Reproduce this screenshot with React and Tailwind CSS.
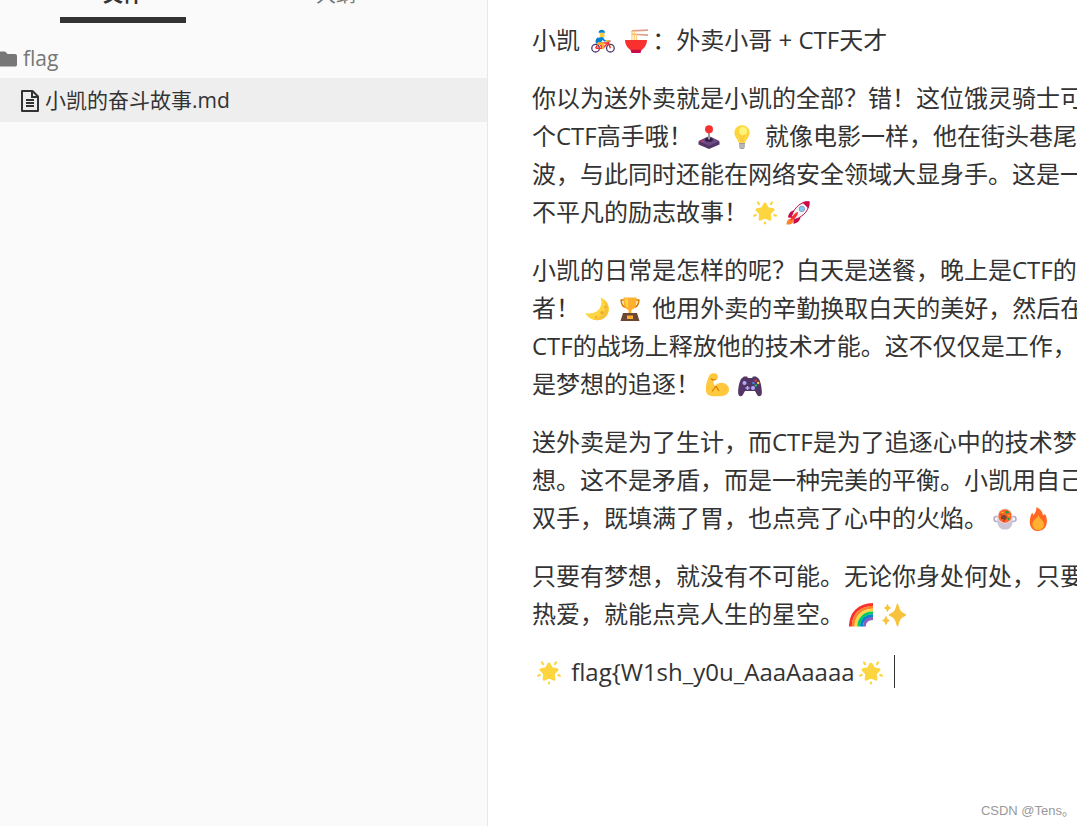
import React from 'react';
import { FaFolder } from 'react-icons/fa';

const emojis = {
  cyclist: (
    <>
      <g fill="none" strokeWidth="1.3">
        <circle cx="4.6" cy="19.2" r="3.8" stroke="#4a3768" />
        <circle cx="19.4" cy="19.2" r="3.8" stroke="#4a3768" />
        <path d="M4.6 19.2 8 14h9l-5.200 5.200H4.6M8 14l3.800 5.200M19.400 19.200 17 12h2.500" stroke="#f8312f" strokeWidth="1.5" />
      </g>
      <path d="M8.500 4h5v3.500L12 9 9 8z" fill="#ffc83d" />
      <path d="M7.500 3.800C7.500.200 13.500-.500 14.200 3.800z" fill="#0084ce" />
      <path d="M8 8.500 11.500 8l2.500 3h4v1.600h-4.600L11 11l-1.500 3-3.500-.5z" fill="#0084ce" />
      <path d="M6.500 8.500C4.500 10 4 12.500 5 14.500l4.500.5 2-5z" fill="#0084ce" />
      <path d="m14.500 11 4 .2v1.400h-4z" fill="#ffc83d" />
      <path d="m7 13 6 .8.500 1.700-1 4.500h-1.600l.3-3.700L6 15.500z" fill="#ffb02e" />
    </>
  ),
  noodles: (
    <>
      <path d="M8.500 1 24 .2v1.700L6.500 2.800zM8 4.500l16 .8V7L7 5.800z" fill="#e39d89" />
      <path d="M8 2v10M10.300 2v10M12.500 5v7" stroke="#ffce7c" strokeWidth="1.300" fill="none" />
      <path d="M1 11h22c0 4.700-2.800 8.500-6 10.300H7C3.800 19.500 1 15.700 1 11z" fill="#f8312f" />
      <path d="M6.500 20.800h11L16.500 24h-9z" fill="#ca0b4a" />
    </>
  ),
  joystick: (
    <>
      <path d="m1.500 16.500 10.500-5 10.500 5v3L12 24 1.500 19.500z" fill="#533566" />
      <path d="m1.500 16 10.500-5 10.500 5L12 20.800z" fill="#6d4a86" />
      <ellipse cx="12" cy="14.800" rx="4" ry="2" fill="#321b41" />
      <path d="M12 7v7.500" stroke="#9b9b9b" strokeWidth="2" />
      <circle cx="12" cy="4.200" r="4" fill="#f8312f" />
      <path d="m5 15.800 2 1" stroke="#f8312f" strokeWidth="1.200" />
    </>
  ),
  bulb: (
    <>
      <path d="M12 .2C7.600.2 4.400 3.500 4.400 7.600c0 4.800 3.500 6.200 4.200 10.200h6.800c.7-4 4.200-5.400 4.200-10.200C19.600 3.500 16.400.2 12 .2z" fill="#fcd53f" />
      <circle cx="13" cy="6" r="4" fill="#fff478" />
      <path d="m9.500 10 1.500 3v5M14.500 10 13 13v5" fill="none" stroke="#f9c23c" strokeWidth=".8" />
      <path d="M9 18h6v4l-1.500 2h-3L9 22z" fill="#9b9b9b" />
      <path d="M9 20h6M9 22h6" stroke="#d3d3d3" />
    </>
  ),
  star: (
    <>
      <path
        d="m12 3 2.600 4.800 5.400 1-3.800 4 .7 5.400-4.900-2.300-4.900 2.300.7-5.400L4 8.800l5.400-1z"
        fill="#fcd53f"
        stroke="#fcd53f"
        strokeWidth="3"
        strokeLinejoin="round"
      />
      <path
        d="m5 1.500 1 1.500M19 1.500 18 3M1.200 14.700l1.500-.7M22.800 14.700l-1.500-.7M12 21.500v1"
        stroke="#fcd53f"
        strokeWidth="2.200"
        strokeLinecap="round"
      />
    </>
  ),
  rocket: (
    <>
      <path d="M5 17.500c-3 0-4.500 3-4.500 6 3 .5 6.500-.5 7-3.500z" fill="#ff822d" />
      <path d="M8 9.500c-4 .5-5.500 3.500-6 7l5 .5zM14.500 16c-.5 4-3.500 6-7 7v-5z" fill="#ca0b4a" />
      <path d="M22.800.8C15.500.8 9 5 5.500 15L9 18.500C18.500 15 23.500 8.500 22.800.8z" fill="#f4f4f4" stroke="#ca0b4a" />
      <path d="M23.500.3c-2.500-.3-5 .1-7.300 1l6.200 6.200c1-2.300 1.400-4.700 1.100-7.200z" fill="#ca0b4a" />
      <circle cx="15.800" cy="7.900" r="2.700" fill="#83cbff" stroke="#7d8fa5" strokeWidth=".8" />
      <path d="M12 11c-3 .5-7 5-7.500 8.500C8 19 12 15 12 11z" fill="#f8312f" />
    </>
  ),
  moon: (
    <>
      <path d="M15.500.5C26 4.500 26.500 17 18.500 21.500 11.500 25.500 3 22 .5 16c8 2 19-3 15-15.500z" fill="#fcd53f" />
      <path d="M18.500 2c6.500 5.500 6.500 15.500 0 19.500-3.500 2-7.500 2.200-11 .5C18.500 21 23 11 18.500 2z" fill="#f9c23c" />
      <g fill="#e8a92e">
        <circle cx="20.500" cy="10" r="1.200" />
        <circle cx="17" cy="15.500" r="1.600" />
        <circle cx="11" cy="20" r="1.100" />
      </g>
    </>
  ),
  trophy: (
    <>
      <path d="M6.500 3H3.200c0 5 1.500 7 5.300 7.500M17.500 3h3.300c0 5-1.500 7-5.300 7.500" fill="none" stroke="#d67d00" strokeWidth="1.600" />
      <path d="M5.500.5h13c.5 6-.5 11-5 12.500v4h-3v-4C6 11.500 5 6.500 5.500.5z" fill="#ffb02e" />
      <path d="M7 1.500h3V11C7.500 9 6.800 5 7 1.500z" fill="#fcd53f" />
      <path d="M5 16h14l2.500 8h-19z" fill="#6d4534" />
      <path d="M9 18.500h6V22H9z" fill="#ffb02e" />
    </>
  ),
  biceps: (
    <>
      <path
        d="M5 1.500C7-.5 11.500-.3 12.500 2c1 2.500 0 5-2.500 5l-1.500.2c-.5 2 0 4.300 1.500 5.800 3.500-4.500 10.500-4.500 13.300.5 2 4.500-.8 9-6.300 9.500-5.500.7-12 .5-14.500-1.500C-1 17.500 1.500 7 5 1.500z"
        fill="#ffc83d"
      />
      <path d="M6 5.500 8 7l3-.5M11 13l-4 5.500M11 13l3 5" fill="none" stroke="#d67d00" strokeWidth="1.200" />
    </>
  ),
  gamepad: (
    <>
      <path
        d="M3.500 5.500 6 3.500h3L10 5h4l1-1.500h3l2.500 2c2.500 3 3.800 12 3.200 15.500-.6 2.500-3 3-4.500 1L17 18H7l-2.200 4c-1.500 2-3.900 1.500-4.500-1C-.3 17.500 1 8.500 3.500 5.500z"
        fill="#533566"
      />
      <circle cx="6.500" cy="10" r="2" fill="#b4acff" />
      <circle cx="15" cy="15" r="2" fill="#b4acff" />
      <path d="M7.500 15h4M9.500 13v4" stroke="#b4acff" strokeWidth="1.400" />
      <circle cx="17.800" cy="7.600" r="1.200" fill="#f8312f" />
      <circle cx="15.400" cy="10" r="1.200" fill="#3f8ef0" />
      <circle cx="20.200" cy="10" r="1.200" fill="#fcd53f" />
      <circle cx="17.800" cy="12.400" r="1.200" fill="#00d26a" />
    </>
  ),
  pot: (
    <>
      <rect x="1" y="9.500" width="22" height="5" rx="2.500" fill="none" stroke="#bea9c6" strokeWidth="1.600" />
      <path d="M4.500 9h15v6c0 4-2.500 6.500-5 7.500h-5c-2.500-1-5-3.500-5-7.500z" fill="#cdc4d6" />
      <circle cx="12" cy="9" r="7.500" fill="#e6e0eb" />
      <circle cx="12" cy="9" r="6.700" fill="#ff6723" />
      <path d="m8 9 3.500-1.500L14 10l-1.500 3L8 12z" fill="#7d4533" />
      <path d="m12 4.500 3-.5 1 2-3 .5zM14 11h3l-1.500 2.500z" fill="#00a651" />
      <path d="m8 5.500 2-1 .5 1.500zM15 8l2 .5-1 1.500z" fill="#fcd53f" />
      <path d="M7 7.500 8.500 7v1.500zM10 13.500h2v1h-2z" fill="#ca0b4a" />
    </>
  ),
  fire: (
    <>
      <path
        d="M10.500 0c4 2 6 5 6.500 8.500L19 7c2.500 4 2.500 10 0 13.500-2 2.800-4.500 3.500-7 3.500-5 0-8.500-4-8.200-9.500.2-4.500 1.200-7 2.700-9l.7 3C9 6 10.500 4 10.500 0z"
        fill="#ff6723"
      />
      <path d="M12.500 8c-1 3-6 5-6 9.500 0 3.500 2.500 5.500 5.700 5.500s5.800-2 5.800-5.500c0-4.500-4.500-5-5.500-9.500z" fill="#ffb02e" />
    </>
  ),
  rainbow: (
    <g fill="none" strokeWidth="2.900">
      <path d="M1.400 23.500C1.500 10 10 1.600 24 1.500" stroke="#f8312f" />
      <path d="M4.200 23.500C4.300 11.500 12 4.400 24 4.300" stroke="#ff822d" />
      <path d="M7 23.500C7 13.500 14 7.100 24 7.100" stroke="#fcd53f" />
      <path d="M9.800 23.500c0-8 5.700-13.600 14.200-13.600" stroke="#00c95f" />
      <path d="M12.600 23.500c0-6.500 4.400-10.800 11.400-10.800" stroke="#0084ce" />
      <path d="M15.400 23.500c0-5 3.100-8 8.600-8" stroke="#8b5fbf" />
    </g>
  ),
  sparkles: (
    <g fill="#f9c23c" stroke="#f9c23c" strokeLinejoin="round">
      <path d="M15.500 1.500c1.800 7 2.800 8.300 8 10.500-5.200 2.200-6.200 3.500-8 10.500-1.800-7-2.800-8.300-8-10.500 5.200-2.200 6.200-3.500 8-10.500z" strokeWidth="1.500" />
      <path d="M5.500 1.500c.8 2.200 1 2.500 3 3.500-2 1-2.200 1.300-3 3.500-.8-2.200-1-2.500-3-3.500 2-1 2.200-1.300 3-3.500zM4 13.500c.9 2.700 1.200 3 3.500 4-2.300 1-2.600 1.300-3.500 4-.9-2.700-1.200-3-3.500-4 2.300-1 2.600-1.300 3.500-4z" />
    </g>
  )
};

function Emoji({ name }) {
  return (
    <span className="inline-flex w-[33px] h-6 justify-center align-[-4px]">
      <svg viewBox="0 0 24 24" className="w-6 h-6" role="img" aria-label={name}>
        {emojis[name]}
      </svg>
    </span>
  );
}

const paragraphs = [
  [
    <>小凯 <Emoji name="cyclist" /><Emoji name="noodles" />：外卖小哥 + CTF天才</>
  ],
  [
    <>你以为送外卖就是小凯的全部？错！这位饿灵骑士可</>,
    <>个CTF高手哦！<Emoji name="joystick" /><Emoji name="bulb" /> 就像电影一样，他在街头巷尾</>,
    <>波，与此同时还能在网络安全领域大显身手。这是一</>,
    <>不平凡的励志故事！<Emoji name="star" /><Emoji name="rocket" /></>
  ],
  [
    <>小凯的日常是怎样的呢？白天是送餐，晚上是CTF的</>,
    <>者！<Emoji name="moon" /><Emoji name="trophy" /> 他用外卖的辛勤换取白天的美好，然后在</>,
    <>CTF的战场上释放他的技术才能。这不仅仅是工作，</>,
    <>是梦想的追逐！<Emoji name="biceps" /><Emoji name="gamepad" /></>
  ],
  [
    <>送外卖是为了生计，而CTF是为了追逐心中的技术梦</>,
    <>想。这不是矛盾，而是一种完美的平衡。小凯用自己</>,
    <>双手，既填满了胃，也点亮了心中的火焰。<Emoji name="pot" /><Emoji name="fire" /></>
  ],
  [
    <>只要有梦想，就没有不可能。无论你身处何处，只要</>,
    <>热爱，就能点亮人生的星空。<Emoji name="rainbow" /><Emoji name="sparkles" /></>
  ],
  [
    <>
      <Emoji name="star" /> flag&#123;W1sh_y0u_AaaAaaaa<Emoji name="star" />{' '}
      <span className="inline-block w-px h-[33px] bg-[#333333] align-[-7px]" />
    </>
  ]
];

function FileIcon() {
  return (
    <svg viewBox="0 0 18 22" className="w-[18px] h-[22px] shrink-0" fill="none" stroke="#333333" strokeWidth="2">
      <path d="M1 1h10.500L17 6.500V21H1z" strokeLinejoin="round" />
      <path d="M11 1v6h6" />
      <path d="M5 10h8M5 13h8M5 16h8" />
    </svg>
  );
}

function Sidebar() {
  return (
    <aside className="w-[488px] shrink-0 bg-[#fafafa] border-r border-[#e7e7e7]">
      <div className="flex items-end h-[23px] pl-[60px] gap-[87px] overflow-hidden text-[20px] leading-[30px]">
        <button type="button" className="w-[126px] pb-[7px] border-b-6 border-[#333333] font-bold text-[#333333]">
          文件
        </button>
        <button type="button" className="w-[126px] pb-[7px] border-b-6 border-transparent text-[#777777]">
          大纲
        </button>
      </div>
      <ul className="pt-[17px] text-[21px]">
        <li className="flex items-center h-[38px] gap-[6px] text-[#777777] overflow-hidden">
          <FaFolder className="w-5 h-5 -ml-[3px] shrink-0" />
          <span>flag</span>
        </li>
        <li className="flex items-center h-11 pt-[2px] pl-[21px] gap-[6px] bg-[#eeeeee] text-[#333333]">
          <FileIcon />
          <span>小凯的奋斗故事.md</span>
        </li>
      </ul>
    </aside>
  );
}

function App() {
  return (
    <div className="relative flex min-h-screen overflow-hidden bg-white font-['Open_Sans','Noto_Sans_CJK_SC',sans-serif]">
      <Sidebar />
      <main className="flex-1 min-w-0 overflow-hidden pt-[21px] pl-11 text-2xl leading-[38px] text-[#333333]">
        <div className="flex flex-col gap-5">
          {paragraphs.map((lines, i) => (
            <p key={i} className="whitespace-nowrap">
              {lines.map((line, j) => (
                <span key={j} className="block h-[38px]">{line}</span>
              ))}
            </p>
          ))}
        </div>
      </main>
      <div className="absolute right-[2px] bottom-[6px] text-[13px] leading-[18px] text-[#999999] font-['Liberation_Sans','Noto_Sans_CJK_SC',sans-serif]">
        CSDN @Tens。
      </div>
    </div>
  );
}

export default App;
